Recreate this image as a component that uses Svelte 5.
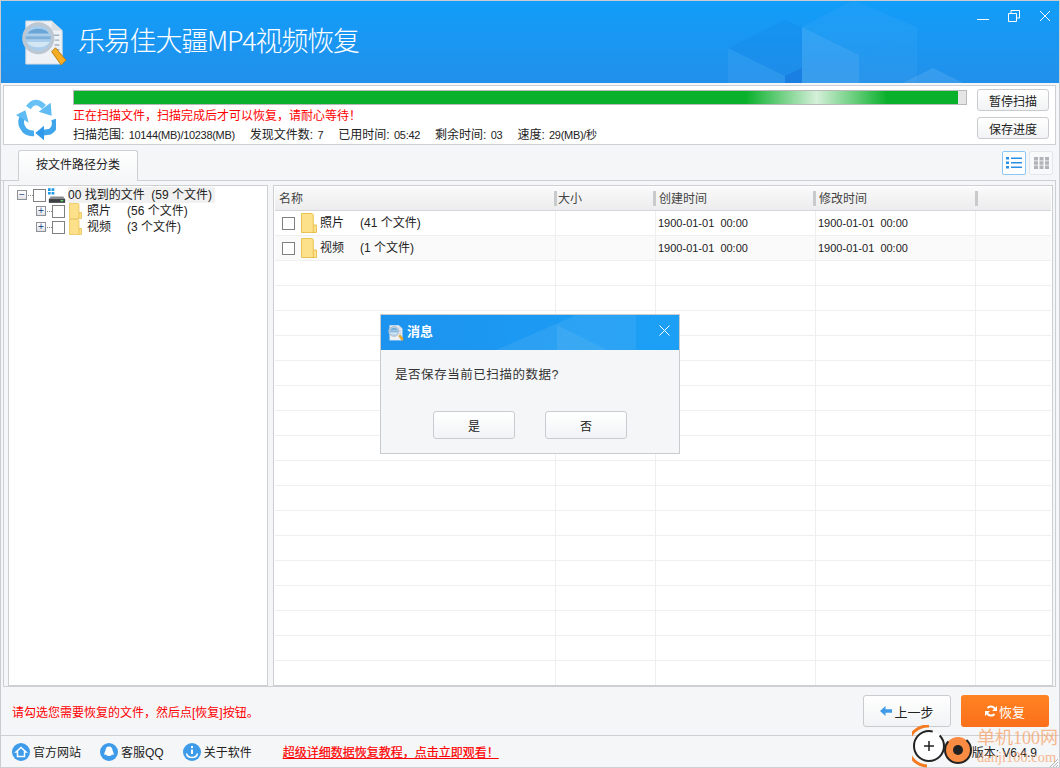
<script>
	const treeChildren = [
		{ name: '照片', count: '(56 个文件)' },
		{ name: '视频', count: '(3 个文件)' }
	];
	const files = [
		{ name: '照片', count: '(41 个文件)', created: '1900-01-01  00:00', modified: '1900-01-01  00:00' },
		{ name: '视频', count: '(1 个文件)', created: '1900-01-01  00:00', modified: '1900-01-01  00:00' }
	];
	const rows = Array.from({ length: 19 }, (_, i) => files[i] ?? null);
	const stats = [
		['扫描范围:', '10144(MB)/10238(MB)'],
		['发现文件数:', '7'],
		['已用时间:', '05:42'],
		['剩余时间:', '03'],
		['速度:', '29(MB)/秒']
	];
</script>

{#snippet folder(w, h)}
	<svg class="folder" width={w} height={h} viewBox="0 0 17 20" preserveAspectRatio="none">
		<path d="M.5.5h11.5l1 1V12h3.500v7.500H.5z" fill="#fde08a" stroke="#e8c04e" />
		<path d="M13 12v7.500" stroke="#e8c04e" />
	</svg>
{/snippet}

{#snippet magnifier(size)}
	<svg width={size} height={size} viewBox="0 0 48 48">
		<path d="M5 1h27l11 10v35H5z" fill="#eef2f6" stroke="#cbd4dc" />
		<path d="M32 1v10h11" fill="#d5dde5" />
		<path d="M34 16h6M35 21h5M35 26h5M35 31h5" stroke="#9fb0bf" stroke-width="1.5" />
		<circle cx="18" cy="19" r="15" fill="#a9cdea" stroke="#bcc7d1" stroke-width="3.5" />
		<path d="M5 17h26v3H5z" fill="#7fb0d8" />
		<path d="M6 23a13 9 0 0 0 24 0z" fill="#d3e6f3" />
		<path d="M7 14a12 8 0 0 1 22 0z" fill="#6aa6d5" />
		<path d="M32 33l4-4 11 13-5 5z" fill="#f4ad25" stroke="#b47a10" />
	</svg>
{/snippet}

<div class="window">
	<header class="titlebar">
		<svg class="facets" width="1060" height="83" viewBox="0 0 1060 83">
			<path d="M728 48l57-28 17 7v41l-17 8z" fill="#0f6fd8" opacity=".12" />
			<path d="M728 48l57 28v7h-57z" fill="#fff" opacity=".05" />
			<path d="M785 76l17-8v15h-17z" fill="#0f5fd0" opacity=".35" />
			<path d="M802 27l51-27 64 27-58 28z" fill="#fff" opacity=".04" />
			<path d="M802 27l57 28v28h-57z" fill="#fff" opacity=".11" />
			<path d="M859 55l58-28v56h-58z" fill="#fff" opacity=".04" />
			<path d="M903 83l30-15 30 15z" fill="#fff" opacity=".1" />
		</svg>
		<div class="logo">{@render magnifier(46)}</div>
		<h1>乐易佳大疆MP4视频恢复</h1>
		<div class="win-buttons">
			<svg width="12" height="12" viewBox="0 0 12 12"><path d="M0 9.5h12" stroke="#fff" /></svg>
			<svg width="12" height="12" viewBox="0 0 12 12" fill="none" stroke="#fff"><path d="M.5 3.500h8v8h-8zM3 3V.5h8.500V8H9" /></svg>
			<svg width="12" height="12" viewBox="0 0 12 12" stroke="#fff"><path d="M1 1l10 10M11 1L1 11" /></svg>
		</div>
	</header>

	<section class="scan">
		<svg class="recycle" width="40" height="44" viewBox="18 18 120 132">
			<g fill="none" stroke-width="17">
				<path d="M55 50Q75 20 102 48" stroke="#68c1f5" />
				<path d="M36 80Q28 100 44 118Q55 128 72 127" stroke="#45aaee" />
				<path d="M132 85Q140 110 120 122L95 126" stroke="#3fa5ec" />
			</g>
			<path d="M122 35l3 39-39-12z" fill="#5ebbf3" />
			<path d="M18 72l28-14 10 37z" fill="#5ebbf3" />
			<path d="M102 104l-26 22 26 22z" fill="#3099ea" />
		</svg>
		<div class="scan-main">
			<div class="progress"><div class="progress-fill"></div></div>
			<p class="warn">正在扫描文件，扫描完成后才可以恢复，请耐心等待！</p>
			<p class="stats">
				{#each stats as [label, value]}
					<span>{label} <span class="stat-value">{value}</span></span>
				{/each}
			</p>
		</div>
		<div class="scan-actions">
			<button class="btn">暂停扫描</button>
			<button class="btn">保存进度</button>
		</div>
	</section>

	<div class="tabs">
		<div class="tab">按文件路径分类</div>
		<div class="views">
			<div class="view active">
				<svg width="16" height="12" viewBox="0 0 16 12" fill="#2b8fe6"><path d="M0 0h3v2.500H0zM5 .5h11V2H5zM0 4.500h3V7H0zM5 5h11v1.500H5zM0 9h3v2.500H0zM5 9.500h11V11H5z" /></svg>
			</div>
			<div class="view">
				<svg width="15" height="12" viewBox="0 0 15 12" fill="#b0b3b8"><path d="M0 0h4v3.500H0zM5.500 0h4v3.500h-4zM11 0h4v3.500h-4zM0 4.300h4v3.500H0zM5.500 4.300h4v3.500h-4zM11 4.300h4v3.500h-4zM0 8.500h4V12H0zM5.500 8.500h4V12h-4zM11 8.500h4V12h-4z" /></svg>
			</div>
		</div>
	</div>

	<main class="content">
		<aside class="tree">
			<div class="tree-root">
				<span class="expander">−</span>
				<span class="dots"></span>
				<span class="check"></span>
				<svg width="18" height="15" viewBox="0 0 20 16">
					<path d="M0 0h3v3H0zM4 0h3v3H4zM0 4h3v3H0zM4 4h3v3H4z" fill="#1d9be8" />
					<path d="M3 9h14l2 3v4H1v-4z" fill="#8a8c8f" />
					<path d="M1 12h18v4H1z" fill="#3d3f42" />
					<path d="M14 13h3v1.500h-3z" fill="#5fe06a" />
				</svg>
				<span class="root-label">00 找到的文件&nbsp; (59 个文件)</span>
			</div>
			{#each treeChildren as child}
				<div class="tree-child">
					<span class="expander plus">+</span>
					<span class="dots"></span>
					<span class="check"></span>
					{@render folder(13, 16)}
					<span class="child-name">{child.name}</span>
					<span>{child.count}</span>
				</div>
			{/each}
		</aside>

		<div class="list">
			<div class="list-head">
				<div class="col-name">名称</div>
				<div class="col-size">大小</div>
				<div class="col-date">创建时间</div>
				<div class="col-date">修改时间</div>
				<div class="col-rest"></div>
			</div>
			{#each rows as row, i}
				<div class="row" class:odd={i === 1}>
					<div class="col-name">
						{#if row}
							<span class="check"></span>
							{@render folder(16, 20)}
							<span class="file-name">{row.name}</span>
							<span>{row.count}</span>
						{/if}
					</div>
					<div class="col-size"></div>
					<div class="col-date">{row?.created ?? ''}</div>
					<div class="col-date">{row?.modified ?? ''}</div>
					<div class="col-rest"></div>
				</div>
			{/each}
		</div>
	</main>

	<div class="actions">
		<p class="hint">请勾选您需要恢复的文件，然后点[恢复]按钮。</p>
		<button class="btn back">
			<svg width="12" height="10" viewBox="0 0 12 10" fill="#3d9bea"><path d="M5.500 0L0 5l5.500 5V6.800H12V3.200H5.500z" /></svg>
			上一步
		</button>
		<button class="recover">
			<svg width="12" height="12" viewBox="0 0 12 12">
				<path d="M10 4A4.500 4.500 0 0 0 2.500 3M2 8A4.500 4.500 0 0 0 9.500 9" fill="none" stroke="#fff" stroke-width="2" />
				<path d="M12 1v5H7zM0 11V6h5z" fill="#fff" />
			</svg>
			恢复
		</button>
	</div>

	<footer class="status">
		<a class="link">
			<svg width="18" height="18" viewBox="0 0 18 18"><circle cx="9" cy="9" r="9" fill="#3d9bea" /><path d="M4 9l5-4.500L14 9h-1.500v4.500h-7V9z" fill="none" stroke="#fff" stroke-width="1.500" /></svg>
			官方网站
		</a>
		<a class="link">
			<svg width="18" height="18" viewBox="0 0 18 18"><circle cx="9" cy="9" r="9" fill="#3d9bea" /><path d="M9 3.500c2.500 0 3.500 2 3.500 4 1 1.500 1.500 3.500 1 4.500l-1.500-.5c-.5 1-2 1.500-3 1.500s-2.500-.5-3-1.500l-1.500.5c-.5-1 0-3 1-4.500 0-2 1-4 3.500-4z" fill="#fff" /></svg>
			客服QQ
		</a>
		<a class="link">
			<svg width="18" height="18" viewBox="0 0 18 18"><circle cx="9" cy="9" r="9" fill="#3d9bea" /><path d="M8 3h2v2H8zM8 6.500h2V11H8z" fill="#fff" /><path d="M3.500 10.500C4 13 6.500 14.500 9 14.500s5-1.500 5.500-4" fill="none" stroke="#fff" stroke-width="1.500" /></svg>
			关于软件
		</a>
		<a class="tutorial">超级详细数据恢复教程，点击立即观看！</a>
		<span class="version">版本: V6.4.9</span>
	</footer>

	<div class="dialog">
		<div class="dialog-title">
			<svg class="dialog-facets" width="298" height="35" viewBox="0 0 298 35">
				<path d="M115 35l58-25 22-10h60v35z" fill="#fff" opacity=".07" />
				<path d="M176 10l50 25h-50z" fill="#fff" opacity=".07" />
			</svg>
			{@render magnifier(16)}
			<span class="dialog-label">消息</span>
			<svg class="dialog-close" width="11" height="11" viewBox="0 0 11 11" stroke="#fff"><path d="M.5.500l10 10M10.500.500l-10 10" /></svg>
		</div>
		<p class="question">是否保存当前已扫描的数据?</p>
		<div class="dialog-actions">
			<button class="btn">是</button>
			<button class="btn">否</button>
		</div>
	</div>

	<div class="watermark">
		<svg width="66" height="43" viewBox="0 0 66 43">
			<path d="M17 1A20 20 0 0 0 15 41" fill="none" stroke="#f47b20" stroke-width="3" />
			<circle cx="17" cy="21" r="15" fill="#fff" stroke="#222" stroke-width="2" stroke-dasharray="74 8" />
			<path d="M12 21h10M17 16v10" stroke="#222" stroke-width="1.500" />
			<circle cx="46" cy="25" r="13" fill="#f98b42" stroke="#222" stroke-width="2" stroke-dasharray="50 20" />
			<circle cx="46" cy="25" r="5" fill="#222" />
		</svg>
		<div class="wm-text">
			<span class="wm-cn">单机100网</span>
			<span class="wm-en">danji100.com</span>
		</div>
	</div>

	<svg class="grip" width="9" height="9" viewBox="0 0 9 9" stroke="#b5b7ba"><path d="M9 1L1 9M9 4L4 9M9 7L7 9" /></svg>
</div>

<style>
	:global(body) {
		margin: 0;
		background: #f5f6f8;
	}

	.window {
		position: relative;
		width: 1060px;
		height: 768px;
		overflow: hidden;
		display: flex;
		flex-direction: column;
		background: #f5f6f8;
		border-left: 1px solid #c9cbce;
		border-right: 1px solid #c9cbce;
		box-sizing: border-box;
		font-family: 'Liberation Sans', 'Noto Sans CJK SC', sans-serif;
		font-size: 12px;
		color: #222;
	}

	p,
	h1 {
		margin: 0;
	}

	.titlebar {
		position: relative;
		flex: none;
		height: 83px;
		box-sizing: border-box;
		display: flex;
		align-items: flex-start;
		color: #fff;
		border-top: 1px solid #c9cbce;
		background: linear-gradient(#119dfa, #2290ea);
	}

	.facets {
		position: absolute;
		top: -1px;
		left: -1px;
	}

	.logo {
		position: relative;
		margin: 19px 0 0 20px;
		height: 46px;
	}

	h1 {
		position: relative;
		margin: 21px 0 0 11px;
		font-family: 'Noto Sans CJK SC', sans-serif;
		font-size: 27px;
		font-weight: 300;
		line-height: 36px;
		letter-spacing: -1.2px;
		white-space: nowrap;
	}

	.win-buttons {
		position: relative;
		margin: 9px 0 0 auto;
		padding-right: 8px;
		display: flex;
		gap: 19px;
	}

	.scan {
		flex: none;
		height: 56px;
		margin: 2px 3px 0 2px;
		padding: 2px 0 0 0;
		border: 1px solid #cdcfd2;
		background: #fff;
		display: flex;
	}

	.recycle {
		margin: 9px 0 0 12px;
		flex: none;
	}

	.scan-main {
		margin-left: 17px;
		width: 894px;
		flex: none;
	}

	.progress {
		height: 13px;
		border: 1px solid #b9b9b9;
		background: #e5e5e5;
		margin-top: 2px;
	}

	.progress-fill {
		width: 884px;
		height: 13px;
		background: linear-gradient(90deg, #09b02b 0, #09b02b 76%, #d5efd9 84%, #09b02b 92%, #09b02b 100%);
	}

	.warn {
		margin-top: 3px;
		color: #f00;
		line-height: 16px;
	}

	.stats {
		margin-top: 3px;
		line-height: 16px;
		display: flex;
		gap: 15px;
		white-space: nowrap;
	}

	.stat-value {
		margin-left: 1px;
		font-size: 11px;
		letter-spacing: -.3px;
	}

	.scan-actions {
		margin: 1px 0 0 10px;
		display: flex;
		flex-direction: column;
		gap: 6px;
	}

	.btn {
		box-sizing: border-box;
		border: 1px solid #c9cbce;
		border-radius: 3px;
		background: linear-gradient(#fff, #f2f3f5);
		font: inherit;
		color: #222;
		padding: 0;
	}

	.scan-actions .btn {
		width: 72px;
		height: 22px;
	}

	.tabs {
		flex: none;
		height: 35px;
		display: flex;
		align-items: flex-end;
		justify-content: space-between;
		padding-left: 17px;
		border-bottom: 1px solid #cdcfd2;
		margin: 0 3px 0 0;
	}

	.tab {
		width: 120px;
		height: 31px;
		box-sizing: border-box;
		margin-bottom: -1px;
		border: 1px solid #cdcfd2;
		border-bottom: none;
		border-radius: 3px 3px 0 0;
		background: linear-gradient(#fff, #f5f6f8);
		text-align: center;
		line-height: 28px;
	}

	.views {
		display: flex;
		gap: 3px;
		align-self: flex-start;
		margin: 6px 3px 0 0;
	}

	.view {
		width: 24px;
		height: 24px;
		box-sizing: border-box;
		display: flex;
		align-items: center;
		justify-content: center;
		border: 1px solid #e4e6e9;
		border-radius: 2px;
		background: #f8f9fa;
	}

	.view.active {
		border-color: #8cc6f5;
		background: #fff;
	}

	.content {
		flex: 1;
		min-height: 0;
		display: flex;
		gap: 5px;
		padding: 4px 2px 0 4px;
		margin: 0 3px 0 2px;
		border-left: 1px solid #cdcfd2;
		border-right: 1px solid #cdcfd2;
		border-bottom: 1px solid #cdcfd2;
	}

	.tree {
		flex: none;
		width: 260px;
		box-sizing: border-box;
		padding: 1px 0 0 8px;
		border: 1px solid #cdcfd2;
		background: #fff;
	}

	.tree-root,
	.tree-child {
		display: flex;
		align-items: center;
		height: 16px;
		white-space: nowrap;
		line-height: 16px;
	}

	.tree-child {
		padding-left: 19px;
	}

	.tree-child :global(.folder) {
		margin-left: 4px;
	}

	.expander {
		width: 10px;
		height: 10px;
		box-sizing: border-box;
		margin-right: 1px;
		border: 1px solid #8d9197;
		background: linear-gradient(#fff, #dfe1e5);
		color: #2c4f8f;
		font-size: 10px;
		line-height: 8px;
		text-align: center;
	}

	.dots {
		width: 5px;
		border-top: 1px dotted #888;
	}

	.check {
		flex: none;
		width: 13px;
		height: 13px;
		box-sizing: border-box;
		border: 1px solid #808080;
		background: #fff;
	}

	.tree-root svg {
		margin: 0 2px 0 2px;
	}

	.root-label {
		background: #f1f1f1;
		padding-right: 3px;
	}

	.child-name {
		width: 40px;
		margin-left: 5px;
	}

	.list {
		flex: 1;
		min-width: 0;
		box-sizing: border-box;
		padding: 1px;
		border: 1px solid #cdcfd2;
		background: #fff;
		overflow: hidden;
	}

	.list-head,
	.row {
		display: flex;
	}

	.list-head {
		height: 23px;
		line-height: 25px;
		color: #444;
		border-bottom: 1px solid #d5d7da;
		background: linear-gradient(#fafafa, #ececee);
	}

	.list-head > div {
		padding-left: 3px;
		border-left: 3px solid;
		border-image: linear-gradient(transparent 20%, #c9cacc 20%, #c9cacc 80%, transparent 80%) 1;
	}

	.list-head > .col-name {
		width: 279px;
		border: none;
		padding-left: 4px;
	}

	.list-head > .col-size {
		width: 99px;
		padding-left: 1px;
	}

	.list-head > .col-date:nth-child(4) {
		width: 162px;
	}

	.row {
		height: 25px;
		box-sizing: border-box;
		border-bottom: 1px solid #efefef;
		line-height: 24px;
		font-size: 11px;
	}

	.row > div {
		border-left: 1px solid #efefef;
		padding-left: 2px;
		white-space: pre;
	}

	.row > .col-name {
		border: none;
		display: flex;
		align-items: center;
		padding-left: 7px;
		font-size: 12px;
	}

	.row.odd {
		background: #fafafa;
	}

	.row :global(.folder) {
		margin-left: 6px;
	}

	.file-name {
		width: 40px;
		margin-left: 3px;
	}

	.col-name {
		width: 280px;
		box-sizing: border-box;
		flex: none;
	}

	.col-size {
		width: 100px;
		box-sizing: border-box;
		flex: none;
	}

	.col-date {
		width: 160px;
		box-sizing: border-box;
		flex: none;
	}

	.col-rest {
		flex: 1;
	}

	.actions {
		flex: none;
		height: 48px;
		display: flex;
		align-items: center;
		padding: 0 10px 0 11px;
		border-bottom: 1px solid #cdcfd2;
	}

	.hint {
		color: #f00;
		margin-right: auto;
		margin-top: 1px;
	}

	.actions button {
		height: 32px;
		font-size: 13px;
		display: flex;
		align-items: center;
		justify-content: center;
		gap: 2px;
	}

	.back {
		width: 88px;
	}

	.recover {
		width: 88px;
		margin-left: 10px;
		border: none;
		border-radius: 3px;
		color: #fff;
		font: inherit;
		background: linear-gradient(#ff8422, #fb6f1b);
	}

	.status {
		flex: none;
		height: 31px;
		display: flex;
		align-items: center;
		padding: 0 0 0 11px;
		border-bottom: 1px solid #cdcfd2;
	}

	.link {
		display: flex;
		align-items: center;
		gap: 3px;
		margin-right: 19px;
		white-space: nowrap;
	}

	.tutorial {
		margin-left: 12px;
		color: #f00;
		text-decoration: underline;
		-webkit-text-stroke: .2px #f00;
	}

	.version {
		margin-left: auto;
		padding-right: 22px;
	}

	.dialog {
		position: absolute;
		left: 379px;
		top: 314px;
		width: 300px;
		height: 140px;
		box-sizing: border-box;
		border: 1px solid #c9cbce;
		background: #f5f6f8;
	}

	.dialog-title {
		position: relative;
		height: 35px;
		display: flex;
		align-items: center;
		gap: 3px;
		padding-left: 7px;
		color: #fff;
		font-size: 13px;
		font-weight: 700;
		background: linear-gradient(90deg, #1c93ef, #1ca0f6);
	}

	.dialog-label {
		position: relative;
		margin-bottom: 5px;
	}

	.dialog-facets {
		position: absolute;
		left: 0;
		top: 0;
	}

	.dialog-close {
		position: absolute;
		right: 9px;
		top: 10px;
	}

	.question {
		margin: 16px 0 0 14px;
		font-size: 12.5px;
		letter-spacing: .55px;
		line-height: 18px;
		color: #333;
	}

	.dialog-actions {
		display: flex;
		justify-content: center;
		gap: 30px;
		margin-top: 27px;
	}

	.dialog-actions .btn {
		width: 82px;
		height: 28px;
	}

	.watermark {
		position: absolute;
		left: 911px;
		top: 725px;
		width: 148px;
		height: 43px;
		pointer-events: none;
	}

	.watermark svg {
		position: absolute;
		left: 0;
		top: 0;
	}

	.wm-text {
		position: absolute;
		left: 65px;
		top: 1px;
		display: flex;
		flex-direction: column;
		font-family: 'Liberation Serif', 'Noto Sans CJK SC', serif;
		color: #f5a46b;
		opacity: .75;
	}

	.wm-cn {
		font-size: 18px;
		line-height: 24px;
		white-space: nowrap;
	}

	.wm-en {
		font-size: 14.5px;
		line-height: 15px;
	}

	.grip {
		position: absolute;
		right: 1px;
		bottom: 1px;
	}
</style>
